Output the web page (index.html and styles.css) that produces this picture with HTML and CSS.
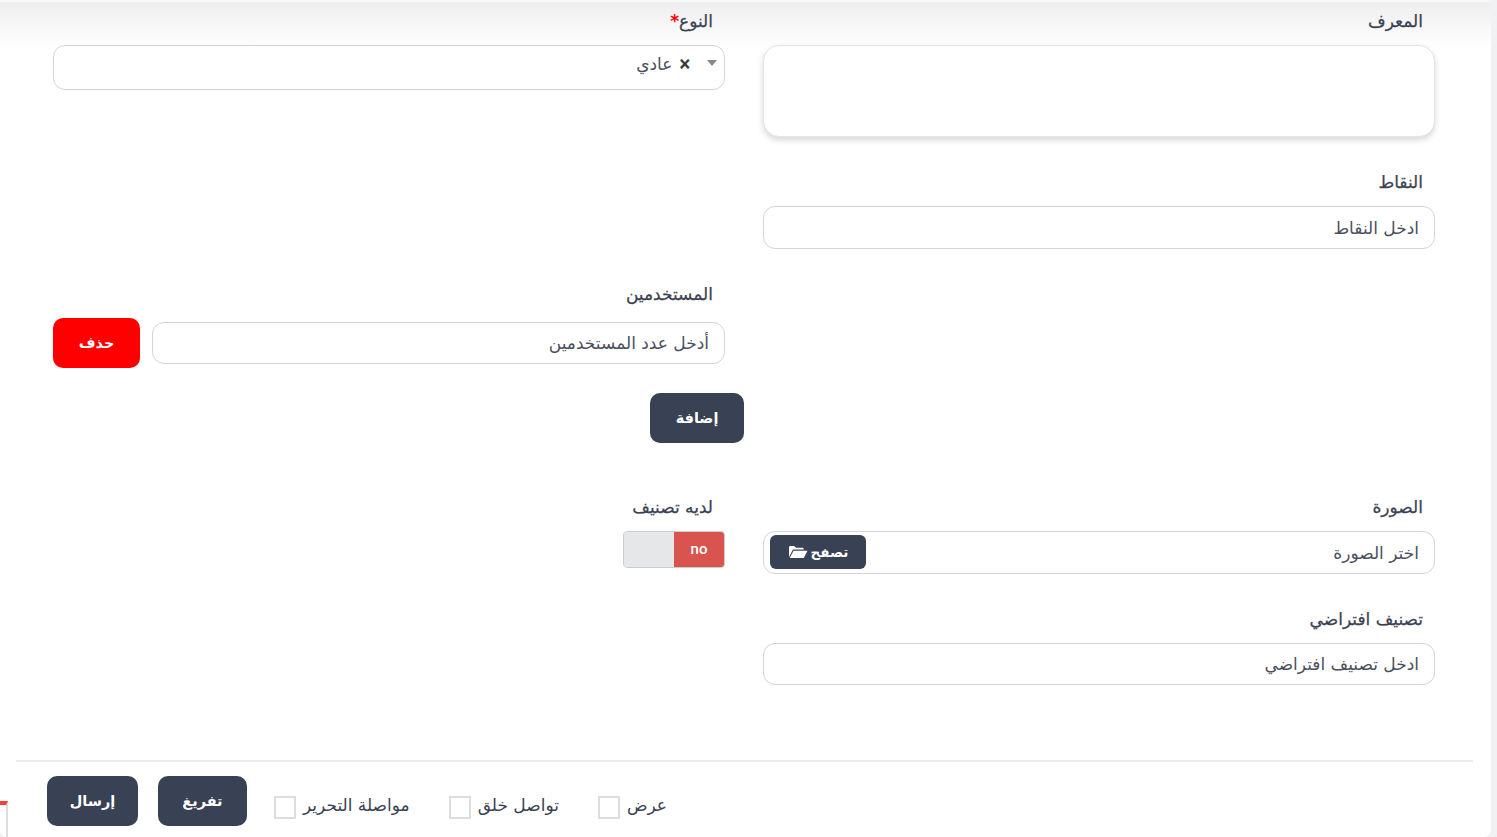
FILE: index.html
```html
<!DOCTYPE html>
<html lang="ar" dir="rtl">
<head>
<meta charset="utf-8">
<title>نموذج</title>
<link rel="stylesheet" href="styles.css">
</head>
<body>
<main class="card">
  <form class="form">
    <div class="grid">
      <div class="col">
        <div class="field field-id">
          <label class="label">المعرف</label>
          <div class="control area"></div>
        </div>
        <div class="field field-points">
          <label class="label">النقاط</label>
          <div class="control">ادخل النقاط</div>
        </div>
      </div>
      <div class="col">
        <div class="field">
          <label class="label">النوع<span class="req">*</span></label>
          <div class="control select">
            <svg class="caret" width="10" height="6" viewBox="0 0 10 6"><path d="M0 0h10L5 6z" fill="#888"/></svg>
            <span class="clear">×</span>
            <span>عادي</span>
          </div>
        </div>
      </div>
    </div>

    <div class="users">
      <label class="label">المستخدمين</label>
      <div class="users-row">
        <div class="control users-input">أدخل عدد المستخدمين</div>
        <button type="button" class="btn btn-red">حذف</button>
      </div>
    </div>
    <div class="add-row"><button type="button" class="btn btn-dark">إضافة</button></div>

    <div class="grid grid-lower">
      <div class="col">
        <div class="field field-image">
          <label class="label">الصورة</label>
          <div class="control file">
            <span>اختر الصورة</span>
            <button type="button" class="browse">تصفح
              <svg width="20" height="14" viewBox="0 0 20 14"><path d="M1 12V2.200q0-1.200 1.200-1.200h4l1.800 1.800h6.500q1.200 0 1.200 1.200v.6H5L1 12z" fill="#fff"/><path d="M5.600 5.800H19.500L15.800 13H1.600z" fill="#fff"/></svg>
            </button>
          </div>
        </div>
        <div class="field">
          <label class="label">تصنيف افتراضي</label>
          <div class="control control-short">ادخل تصنيف افتراضي</div>
        </div>
      </div>
      <div class="col">
        <div class="field">
          <label class="label">لديه تصنيف</label>
          <div class="toggle"><span class="toggle-no">no</span><span class="toggle-off"></span></div>
        </div>
      </div>
    </div>

    <div class="footer">
      <label class="check"><span>عرض</span><span class="box"></span></label>
      <label class="check"><span>تواصل خلق</span><span class="box"></span></label>
      <label class="check"><span>مواصلة التحرير</span><span class="box"></span></label>
      <button type="button" class="btn btn-dark btn-reset">تفريغ</button>
      <button type="button" class="btn btn-dark btn-send">إرسال</button>
    </div>
  </form>
</main>
<span class="edge-mark"></span>
</body>
</html>
```
FILE: styles.css
```css
* { box-sizing: border-box; }
html, body { margin: 0; height: 837px; overflow: hidden; }
body {
  background: #f1f1f3;
  font-family: "DejaVu Sans", "Noto Sans", sans-serif;
  color: #3a4152;
  font-size: 17px;
}
.card {
  width: 1491px;
  height: 837px;
  margin-right: 6px;
  background: #fff;
  background-image: linear-gradient(#eeeeee 0, #ffffff 46px);
  border-radius: 0 0 8px 8px;
  border-top: 2px solid #f7f7f7;
  padding-top: 9px;
}
.form { margin: 0 18px 0 16px; }
.grid { display: grid; grid-template-columns: 672px 672px; column-gap: 38px; padding: 0 38px 0 37px; }
.col { display: flex; flex-direction: column; }
.label {
  display: block;
  padding-right: 12px;
  font-size: 17px;
  line-height: 20px;
  height: 34px;
  -webkit-text-stroke: .25px #3a4152;
}
.req { color: #f00; font-weight: 700; -webkit-text-stroke: 0; }
.control {
  height: 43px;
  border: 1px solid #d3d3dc;
  border-radius: 12px;
  background: #fff;
  padding: 0 15px;
  display: flex;
  align-items: center;
  font-size: 17px;
  color: #4a4f5e;
}
.control-short { height: 42px; }
.area { height: 92px; border-color: #e4e4ea; box-shadow: 0 3px 6px rgba(0, 0, 0, .16); border-radius: 16px; }
.field-points { margin-top: 35px; }
.select { height: 45px; padding: 0 7px 8px; gap: 6px; }
.caret { margin-left: 10px; margin-bottom: 1px; }
.clear { font-weight: 700; font-size: 15px; color: #333; -webkit-text-stroke: .4px #333; }
.users { margin: 35px 748px 0 37px; }
.users-row { display: flex; gap: 12px; align-items: center; }
.users-input { flex: 1; height: 42px; }
.btn {
  border: 0;
  border-radius: 10px;
  color: #fff;
  font: 700 14.500px "DejaVu Sans", sans-serif;
  height: 50px;
  cursor: pointer;
}
.btn-red { background: #f00; width: 87px; }
.btn-dark { background: #394154; }
.add-row { margin: 25px 729px 0 0; }
.add-row .btn { width: 94px; }
.grid-lower { margin-top: 54px; }
.field-image { margin-bottom: 35px; }
.file { justify-content: space-between; padding: 0 15px 0 6px; }
.browse {
  background: #394154;
  color: #fff;
  border: 0;
  border-radius: 6px;
  height: 34px;
  width: 96px;
  margin-bottom: 1px;
  font: 700 13.500px "DejaVu Sans", sans-serif;
  display: flex;
  align-items: center;
  justify-content: center;
  gap: 3px;
}
.toggle {
  width: 102px;
  height: 37px;
  border: 1px solid #ccc;
  border-radius: 4px;
  display: flex;
  overflow: hidden;
}
.toggle-no {
  width: 50px;
  padding-bottom: 2px;
  background: #d9534f;
  color: #fff;
  font: 500 15px Roboto, "Liberation Sans", sans-serif;
  display: flex;
  align-items: center;
  justify-content: center;
}
.toggle-off { flex: 1; background: #e6e7e8; }
.footer {
  margin-top: 75px;
  padding: 14px 806px 0 0;
  border-top: 2px solid #ececec;
  height: 76px;
  display: flex;
  align-items: flex-start;
}
.check { display: flex; align-items: center; gap: 7px; margin: 20px 0 0 39px; font-size: 17px; }
.check span:first-child { margin-top: -5px; }
.box { width: 22px; height: 23px; border: 2px solid #ddd; background: #fff; }
.btn-reset { width: 89px; margin-right: -12px; }
.btn-send { width: 91px; margin-right: 20px; }
.edge-mark {
  position: absolute;
  left: 0;
  top: 801px;
  width: 8px;
  height: 36px;
  border-top: 4px solid #f44336;
  border-right: 2px solid #ddd;
}
```
